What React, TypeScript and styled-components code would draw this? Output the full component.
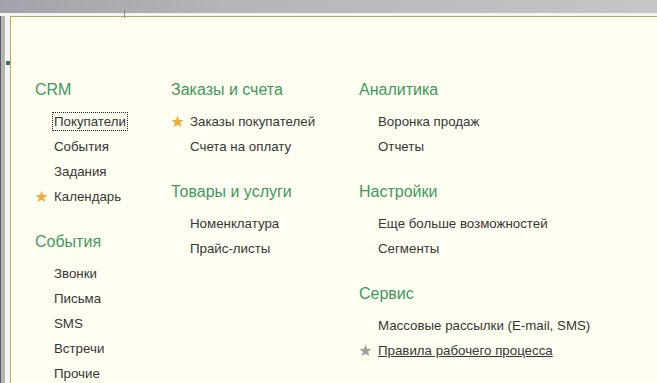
import { createGlobalStyle, styled } from "styled-components";

const GlobalStyle = createGlobalStyle`
  html, body {
    margin: 0;
    padding: 0;
    width: 100%;
    height: 100%;
    overflow: hidden;
  }
  body {
    font-family: "Liberation Sans", Arial, sans-serif;
    background: #f2f2f2;
  }
  #root {
    height: 100%;
  }
`;

const Window = styled.div`
  display: flex;
  flex-direction: column;
  width: 657px;
  height: 383px;
`;

const TopBar = styled.div`
  position: relative;
  flex: 0 0 13px;
  background: linear-gradient(to right, #a3a3ab 0%, #b4b4ba 35%, #c6c6c8 100%);
`;

const Tick = styled.div`
  position: absolute;
  left: 124px;
  top: 9px;
  width: 1px;
  height: 9px;
  background: #8c8c8c;
`;

const Body = styled.div`
  flex: 1;
  display: flex;
  padding-top: 3px;
  background: #f4f4f4;
`;

const LeftEdge = styled.div`
  position: relative;
  flex: 0 0 10px;
  background: linear-gradient(to right, #5c5c5c 0, #5c5c5c 1px, #b4b4b4 1px, #b4b4b4 5px, #f4f4f4 5px);
`;

const Grip = styled.div`
  position: absolute;
  left: 6px;
  top: 45px;
  width: 4px;
  height: 4px;
  background: #3f6f52;
`;

const Panel = styled.div`
  flex: 1;
  border-top: 1px solid #b5ab5a;
  border-left: 1px solid #b5ab5a;
  background: #fffff2;
  padding: 63px 0 0 24px;
  display: grid;
  grid-template-columns: 136px 188px 1fr;
  align-items: start;
`;

const Column = styled.div`
  display: flex;
  flex-direction: column;
  gap: 23px;
`;

const Section = styled.div`
  display: flex;
  flex-direction: column;
`;

const Heading = styled.div`
  font-size: 16px;
  line-height: 20px;
  color: #3c9a5c;
  margin-bottom: 9px;
`;

const Item = styled.div`
  position: relative;
  display: flex;
  align-items: center;
  height: 25px;
  padding-left: 19px;
  font-size: 13.3px;
  color: #363636;
  white-space: nowrap;
`;

const Label = styled.span<{ $focused?: boolean; $link?: boolean }>`
  padding: 1px 1px;
  margin-left: -2px;
  border: 1px dotted ${(p) => (p.$focused ? "#222" : "transparent")};
  text-decoration: ${(p) => (p.$link ? "underline" : "none")};
`;

const StarIcon = styled.svg`
  position: absolute;
  left: 0;
  top: 6px;
  width: 13px;
  height: 13px;
`;

function Star({ color }: { color: string }) {
  return (
    <StarIcon viewBox="0 0 24 24">
      <polygon
        points="12,1.5 15,9 23,9.3 16.8,14.3 19,22.3 12,17.8 5,22.3 7.2,14.3 1,9.3 9,9"
        fill={color}
      />
    </StarIcon>
  );
}

type Entry = { text: string; star?: "orange" | "grey"; focused?: boolean; link?: boolean };
type Group = { title: string; items: Entry[] };

const columns: Group[][] = [
  [
    {
      title: "CRM",
      items: [
        { text: "Покупатели", focused: true },
        { text: "События" },
        { text: "Задания" },
        { text: "Календарь", star: "orange" },
      ],
    },
    {
      title: "События",
      items: [
        { text: "Звонки" },
        { text: "Письма" },
        { text: "SMS" },
        { text: "Встречи" },
        { text: "Прочие" },
      ],
    },
  ],
  [
    {
      title: "Заказы и счета",
      items: [
        { text: "Заказы покупателей", star: "orange" },
        { text: "Счета на оплату" },
      ],
    },
    {
      title: "Товары и услуги",
      items: [{ text: "Номенклатура" }, { text: "Прайс-листы" }],
    },
  ],
  [
    {
      title: "Аналитика",
      items: [{ text: "Воронка продаж" }, { text: "Отчеты" }],
    },
    {
      title: "Настройки",
      items: [{ text: "Еще больше возможностей" }, { text: "Сегменты" }],
    },
    {
      title: "Сервис",
      items: [
        { text: "Массовые рассылки (E-mail, SMS)" },
        { text: "Правила рабочего процесса", star: "grey", link: true },
      ],
    },
  ],
];

export default function App() {
  return (
    <Window>
      <GlobalStyle />
      <TopBar>
        <Tick />
      </TopBar>
      <Body>
        <LeftEdge>
          <Grip />
        </LeftEdge>
        <Panel>
          {columns.map((groups, ci) => (
            <Column key={ci}>
              {groups.map((g) => (
                <Section key={g.title}>
                  <Heading>{g.title}</Heading>
                  {g.items.map((it) => (
                    <Item key={it.text}>
                      {it.star && <Star color={it.star === "orange" ? "#f3a93b" : "#a0a0a0"} />}
                      <Label $focused={it.focused} $link={it.link}>
                        {it.text}
                      </Label>
                    </Item>
                  ))}
                </Section>
              ))}
            </Column>
          ))}
        </Panel>
      </Body>
    </Window>
  );
}
